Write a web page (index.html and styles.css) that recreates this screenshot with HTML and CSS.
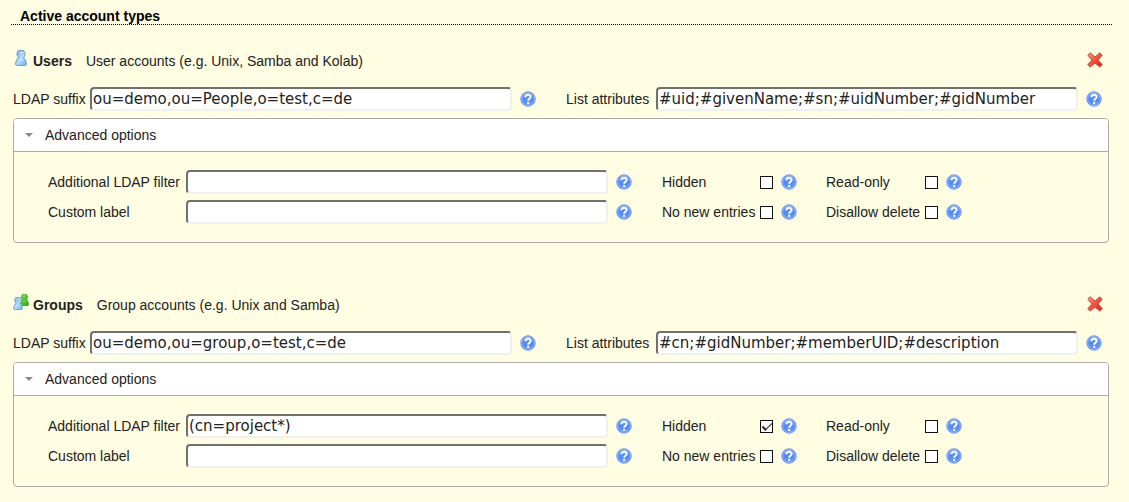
FILE: index.html
```html
<!DOCTYPE html>
<html lang="en">
<head>
<meta charset="utf-8">
<title>Account types</title>
<link rel="stylesheet" href="styles.css">
</head>
<body>
<svg class="defs" aria-hidden="true">
  <defs>
    <linearGradient id="blue" x1="0" y1="0" x2="0" y2="1"><stop offset="0" stop-color="#76a4f8"/><stop offset=".5" stop-color="#4f88fb"/><stop offset="1" stop-color="#5f9cff"/></linearGradient>
    <linearGradient id="red" x1="0" y1="0" x2="1" y2="1"><stop offset="0" stop-color="#ff9a80"/><stop offset=".5" stop-color="#f4513c"/><stop offset="1" stop-color="#ee1010"/></linearGradient>
    <linearGradient id="sky" x1="0" y1="0" x2="1" y2="1"><stop offset="0" stop-color="#5fa8ee"/><stop offset=".5" stop-color="#b4dcff"/><stop offset="1" stop-color="#6cb2f8"/></linearGradient>
    <linearGradient id="green" x1="0" y1="0" x2="1" y2="1"><stop offset="0" stop-color="#7cda60"/><stop offset="1" stop-color="#1fb400"/></linearGradient>
    <symbol id="help" viewBox="0 0 16 16">
      <circle cx="8" cy="8" r="7.2" fill="url(#blue)" stroke="#6c94e4" stroke-width="1"/>
      <circle cx="8" cy="8" r="6.3" fill="none" stroke="#a5c4ff" stroke-width=".7"/>
      <path d="M5.4 6.2C5.5 2.9 10.7 3 10.6 6C10.5 7.7 8.2 7.8 8.2 9.7" fill="none" stroke="#fff" stroke-width="2"/>
      <rect x="7.1" y="10.9" width="2.1" height="2" fill="#fff"/>
    </symbol>
    <symbol id="delete" viewBox="0 0 16 16">
      <path d="M3.2 .8L8 5L12.8 .8L15.2 3.2L11 8L15.2 12.6L12.8 15.1L8 11L3.2 15.1L.8 12.6L5 8L.8 3.2Z" fill="url(#red)" stroke="#c9513e" stroke-width="1" stroke-linejoin="round"/>
    </symbol>
    <symbol id="person" viewBox="0 0 12 16">
      <path d="M3.4 .6H8.6Q10.4 2 10 4.6Q9.6 6.8 8.6 7.8Q10.7 9 11.4 13.2V14.6L10.6 15.4H1.4L.6 14.6V13.2Q1.3 9 3.4 7.8Q2.4 6.8 2 4.6Q1.6 2 3.4 .6Z" stroke-width="1"/>
      <path d="M4 2.5H7.8M3.8 10.2H8" fill="none" stroke="#fff" stroke-opacity=".4"/>
    </symbol>
  </defs>
</svg>
<main class="page">
  <h1 class="title">Active account types</h1>

  <section class="account">
    <header class="account-head">
      <svg class="type-icon"><use href="#person" width="12" height="16" x="2" fill="url(#sky)" stroke="#7199bd"/></svg>
      <h2 class="name">Users</h2>
      <p class="description">User accounts (e.g. Unix, Samba and Kolab)</p>
      <button class="icon-button remove" type="button" aria-label="Delete"><svg class="icon"><use href="#delete"/></svg></button>
    </header>
    <div class="main-row">
      <label for="u-suffix">LDAP suffix</label>
      <input class="text" id="u-suffix" type="text" value="ou=demo,ou=People,o=test,c=de">
      <button class="icon-button" type="button" aria-label="Help"><svg class="icon"><use href="#help"/></svg></button>
      <label class="second" for="u-list">List attributes</label>
      <input class="text" id="u-list" type="text" value="#uid;#givenName;#sn;#uidNumber;#gidNumber">
      <button class="icon-button" type="button" aria-label="Help"><svg class="icon"><use href="#help"/></svg></button>
    </div>
    <details class="advanced" open>
      <summary class="advanced-head">Advanced options</summary>
      <div class="options">
        <label for="u-filter">Additional LDAP filter</label>
        <input class="text" id="u-filter" type="text">
        <button class="icon-button" type="button" aria-label="Help"><svg class="icon"><use href="#help"/></svg></button>
        <label for="u-hidden">Hidden</label>
        <input class="check" id="u-hidden" type="checkbox">
        <button class="icon-button" type="button" aria-label="Help"><svg class="icon"><use href="#help"/></svg></button>
        <label for="u-read">Read-only</label>
        <input class="check" id="u-read" type="checkbox">
        <button class="icon-button" type="button" aria-label="Help"><svg class="icon"><use href="#help"/></svg></button>
        <label for="u-custom">Custom label</label>
        <input class="text" id="u-custom" type="text">
        <button class="icon-button" type="button" aria-label="Help"><svg class="icon"><use href="#help"/></svg></button>
        <label for="u-nonew">No new entries</label>
        <input class="check" id="u-nonew" type="checkbox">
        <button class="icon-button" type="button" aria-label="Help"><svg class="icon"><use href="#help"/></svg></button>
        <label for="u-nodel">Disallow delete</label>
        <input class="check" id="u-nodel" type="checkbox">
        <button class="icon-button" type="button" aria-label="Help"><svg class="icon"><use href="#help"/></svg></button>
      </div>
    </details>
  </section>

  <section class="account">
    <header class="account-head">
      <svg class="type-icon"><use href="#person" width="9" height="12" x="7" fill="url(#green)" stroke="#3c9430"/><use href="#person" width="10" height="13" y="3" fill="url(#sky)" stroke="#7199bd"/></svg>
      <h2 class="name">Groups</h2>
      <p class="description">Group accounts (e.g. Unix and Samba)</p>
      <button class="icon-button remove" type="button" aria-label="Delete"><svg class="icon"><use href="#delete"/></svg></button>
    </header>
    <div class="main-row">
      <label for="g-suffix">LDAP suffix</label>
      <input class="text" id="g-suffix" type="text" value="ou=demo,ou=group,o=test,c=de">
      <button class="icon-button" type="button" aria-label="Help"><svg class="icon"><use href="#help"/></svg></button>
      <label class="second" for="g-list">List attributes</label>
      <input class="text" id="g-list" type="text" value="#cn;#gidNumber;#memberUID;#description">
      <button class="icon-button" type="button" aria-label="Help"><svg class="icon"><use href="#help"/></svg></button>
    </div>
    <details class="advanced" open>
      <summary class="advanced-head">Advanced options</summary>
      <div class="options">
        <label for="g-filter">Additional LDAP filter</label>
        <input class="text" id="g-filter" type="text" value="(cn=project*)">
        <button class="icon-button" type="button" aria-label="Help"><svg class="icon"><use href="#help"/></svg></button>
        <label for="g-hidden">Hidden</label>
        <input class="check" id="g-hidden" type="checkbox" checked>
        <button class="icon-button" type="button" aria-label="Help"><svg class="icon"><use href="#help"/></svg></button>
        <label for="g-read">Read-only</label>
        <input class="check" id="g-read" type="checkbox">
        <button class="icon-button" type="button" aria-label="Help"><svg class="icon"><use href="#help"/></svg></button>
        <label for="g-custom">Custom label</label>
        <input class="text" id="g-custom" type="text">
        <button class="icon-button" type="button" aria-label="Help"><svg class="icon"><use href="#help"/></svg></button>
        <label for="g-nonew">No new entries</label>
        <input class="check" id="g-nonew" type="checkbox">
        <button class="icon-button" type="button" aria-label="Help"><svg class="icon"><use href="#help"/></svg></button>
        <label for="g-nodel">Disallow delete</label>
        <input class="check" id="g-nodel" type="checkbox">
        <button class="icon-button" type="button" aria-label="Help"><svg class="icon"><use href="#help"/></svg></button>
      </div>
    </details>
  </section>
</main>
</body>
</html>
```
FILE: styles.css
```css
* { box-sizing: border-box; }

body {
  margin: 0;
  background: #fffde2;
  color: #222;
  font: 14px/16px "Liberation Sans", Arial, sans-serif;
}

.defs { display: block; width: 0; height: 0; }

.page { padding: 8px 17px 0 11px; }

.title {
  margin: 0;
  padding-left: 9px;
  border-bottom: 1px dotted #000;
  color: #000;
  font: bold 14px/16px "Liberation Sans", Arial, sans-serif;
}

.account { padding: 24px 3px 26px 2px; }

.account:last-child { padding-bottom: 12px; }

.account-head {
  display: flex;
  align-items: center;
  height: 24px;
}

.type-icon { width: 16px; height: 16px; margin-bottom: 6px; }

.name {
  margin: 0 14px 0 4px;
  font: bold 14px/16px "Liberation Sans", Arial, sans-serif;
}

.description { margin: 0; }

.icon-button {
  width: 16px;
  height: 16px;
  padding: 0;
  border: 0;
  background: none;
}

.icon { display: block; width: 16px; height: 16px; }

.remove { margin: 0 6px 2px auto; }

.main-row {
  display: grid;
  grid-template-columns: 73px minmax(0, 1fr) 16px 116px minmax(0, 1fr) 16px;
  align-items: center;
  margin: 14px 7px 7px 0;
  white-space: nowrap;
}

.main-row .text { width: auto; margin: 0 8px 0 4px; }

.second { padding-left: 30px; }

.text {
  min-width: 0;
  height: 24px;
  padding: 1px;
  border: 2px solid;
  border-color: #707070 #f0f0f0 #f0f0f0 #707070;
  border-radius: 4px;
  background: #fff;
  color: #222;
  font: 15px/20px "DejaVu Sans", sans-serif;
}

.advanced {
  border: 1px solid #aaa;
  border-radius: 4px;
}

.advanced-head {
  display: flex;
  align-items: center;
  gap: 12px;
  height: 33px;
  padding-left: 11px;
  border-bottom: 1px solid #aaa;
  border-radius: 3px 3px 0 0;
  background: #fff;
}

.advanced-head::before {
  content: "";
  border: 4px solid transparent;
  border-top-color: #888;
  border-bottom: 0;
}

.options {
  display: grid;
  grid-template-columns: 138px minmax(0, 422px) 54px 98px 13px 53px 99px 13px 24px;
  row-gap: 6px;
  align-items: center;
  padding: 18px 34px;
  white-space: nowrap;
}

.options .icon-button { margin-left: 8px; }

.check {
  appearance: none;
  display: grid;
  place-items: center;
  width: 13px;
  height: 13px;
  margin: 0;
  border: 1px solid #111;
  background: #fff;
}

.check:checked::before {
  content: "";
  width: 8px;
  height: 4px;
  margin-bottom: 2px;
  border: solid #222;
  border-width: 0 0 1px 2px;
  rotate: -45deg;
}
```
